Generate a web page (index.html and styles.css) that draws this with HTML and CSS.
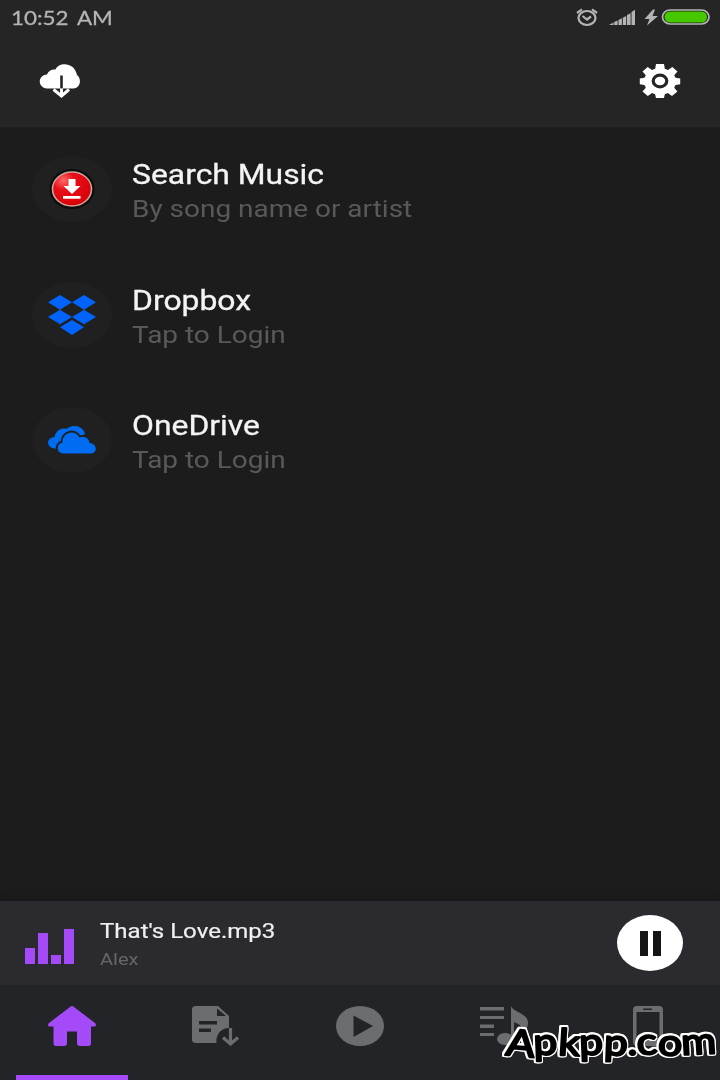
FILE: index.html
```html
<!DOCTYPE html>
<html lang="en">
<head>
    <meta charset="UTF-8">
    <meta name="viewport" content="width=device-width, initial-scale=1.0">
    <title>Music Player</title>
    <link rel="stylesheet" href="styles.css">
</head>
<body>
    <div class="app">
        <header>
            <div class="status">
                <span class="time">10:52 AM</span>
                <svg width="136" height="20" viewBox="0 0 136 20">
                    <!-- alarm -->
                    <g fill="none" stroke="#b4b4b4" stroke-width="2.200">
                        <ellipse cx="12" cy="10" rx="8.500" ry="7"/>
                        <path d="M7.500 8l4.500 3.500 4-3M2 5l5-3.700M22 5l-5-3.700"/>
                    </g>
                    <!-- signal -->
                    <path fill="#b4b4b4" d="M34 17l4.500-2.500V17zM39.200 14l3.400-1.500V17h-3.400zM43.500 12l3.400-1.700V17h-3.400zM47.800 9.700l3.400-1.600V17h-3.400zM52 7l3.600-1.700V17H52zM56.500 4l3.500-2.200V17h-3.500z"/>
                    <!-- battery -->
                    <path fill="#b4b4b4" d="M78 1.500L69.500 11h5L72 17.500 83 8h-5.500L80 1.500z"/>
                    <rect x="87.500" y="2" width="46.500" height="14" rx="7.500" fill="#1b2a12" stroke="#b4b4b4" stroke-width="1.700"/>
                    <rect x="89.500" y="3.500" width="42.500" height="11" rx="5.500" fill="#46c800"/>
                </svg>
            </div>
            <div class="toolbar">
                <svg width="42" height="36" viewBox="0 0 42 36">
                    <path fill="#fff" d="M8 25.500C-1.500 24.500-1.800 12.500 8 11.500 9.500 7.500 13 6 16.500 6.500c3.500-8 19-7.500 21.500 5.500 5 4 3.500 13-3.500 13.500z"/>
                    <path stroke="#252525" stroke-width="2.600" d="M22.500 12.500v13"/>
                    <path fill="none" stroke="#fff" stroke-width="3" d="M22.500 25.500v7.500M14.500 26.500l8 6.500 7.500-6.500"/>
                </svg>
                <svg width="42" height="36" viewBox="0 0 42 36">
                    <path fill="#fff" d="M17 1h8l.8 4.700 3.200 1.200 4.300-3 5.200 4.600-3.300 3.800 1.300 2.500 4.700.6v5.900l-4.700.8-1.300 2.600 3.200 3.800-5.400 4.500-4.200-2.900-3 1.200L25 35h-8l-.9-3.700-3-1.200-4.300 2.900-5.300-4.500 3.300-3.800-1.300-2.600L.8 21.300v-5.900l4.700-.6 1.300-2.500-3.300-3.800 5.200-4.600 4.300 3 3.200-1.200z"/>
                    <ellipse cx="21" cy="18" rx="6.800" ry="5.800" fill="#fff" stroke="#252525" stroke-width="3.200"/>
                </svg>
            </div>
        </header>

        <main>
            <div class="row">
                <div class="icon">
                    <svg width="50" height="44" viewBox="0 0 50 44">
                        <defs>
                            <radialGradient id="red" cx=".28" cy=".25" r=".8">
                                <stop offset="0" stop-color="#ff6a6a"/>
                                <stop offset=".35" stop-color="#e81018"/>
                                <stop offset="1" stop-color="#d90008"/>
                            </radialGradient>
                        </defs>
                        <ellipse cx="25" cy="22" rx="22.500" ry="20" fill="#0c0c0c"/>
                        <ellipse cx="25" cy="22" rx="19.500" ry="17" fill="url(#red)" stroke="#c9a398" stroke-width="1.600"/>
                        <path fill="#fff" d="M21.500 12h7v7h5L25 27l-8.500-8h5zM16 29h17.500v2.800H16z"/>
                    </svg>
                </div>
                <div class="info">
                    <div class="name"><span>Search Music</span></div>
                    <div class="desc"><span>By song name or artist</span></div>
                </div>
            </div>
            <div class="row">
                <div class="icon">
                    <svg width="48" height="40" viewBox="0 0 48 40">
                        <path fill="#0064fa" d="M12 0l12 7.300-12 7.400L0 7.300zM36 0l12 7.300-12 7.400-12-7.400zM12 14.700L24 22l-12 7.300L0 22zM36 14.700L48 22l-12 7.300L24 22zM24 25l12 7.300L24 40l-12-7.700z"/>
                    </svg>
                </div>
                <div class="info">
                    <div class="name"><span>Dropbox</span></div>
                    <div class="desc"><span>Tap to Login</span></div>
                </div>
            </div>
            <div class="row">
                <div class="icon">
                    <svg class="cloud" width="48" height="28" viewBox="0 0 48 28">
                        <path d="M8 22.500C-2 22.500-2.500 12 6.500 11 8 4 14 1.500 18.500 3 24-2 34-1 37 7.500L28 16z"/>
                        <path class="front" d="M15.500 27.500C8 27.500 8 17.500 14.500 16.500 14 7 26.500 2.500 31.500 11.500c5-1.500 9.500.5 10 5.500 8.500 1 8 10.500 1 10.500z"/>
                    </svg>
                </div>
                <div class="info">
                    <div class="name"><span>OneDrive</span></div>
                    <div class="desc"><span>Tap to Login</span></div>
                </div>
            </div>
        </main>

        <div class="player">
            <div class="bars">
                <i class="b1"></i><i class="b2"></i><i class="b3"></i><i class="b4"></i>
            </div>
            <div class="song">
                <div class="title"><span>That's Love.mp3</span></div>
                <div class="artist"><span>Alex</span></div>
            </div>
            <div class="pause"><i></i><i></i></div>
        </div>

        <nav>
            <div class="tab active">
                <svg width="48" height="40" viewBox="0 0 48 40">
                    <path fill="#a44af8" d="M24 0q1 0 2 1l21 16q2 2 0 3.500h-4V37q0 3-2.500 3H32q-3 0-3-3V25.500H19V37q0 3-3 3H8q-2.500 0-2.500-3V20.500H1q-2-1.500 0-3.500L22 1q1-1 2-1z"/>
                </svg>
            </div>
            <div class="tab">
                <svg width="48" height="40" viewBox="0 0 48 40">
                    <path fill="#6c6d70" d="M4 0h22l11 10v12c-8 0-13.500 7-12.500 15H4q-4 0-4-3.500v-30Q0 0 4 0z"/>
                    <path fill="#232428" d="M25 2.500V10h9zM7 15h18v3.500H7zM7 22.500h12V26H7z"/>
                    <path fill="none" stroke="#6c6d70" stroke-width="3.200" d="M38.500 22v15.500M31 31.500l7.500 6.500 7.500-6.500"/>
                </svg>
            </div>
            <div class="tab">
                <svg width="48" height="40" viewBox="0 0 48 40">
                    <ellipse cx="24" cy="20" rx="24" ry="20" fill="#6c6d70"/>
                    <path fill="#232428" d="M17.500 9.500v21.500l19.500-11z"/>
                </svg>
            </div>
            <div class="tab">
                <svg width="48" height="40" viewBox="0 0 48 40">
                    <path fill="#6c6d70" d="M0 1h24v3.500H0zM0 10h24v3H0zM0 18.500h14V22H0zM0 27h14v3H0z"/>
                    <ellipse cx="25" cy="33" rx="8" ry="6" fill="#6c6d70"/>
                    <path fill="#6c6d70" d="M31 0c3 7 17 7 17 17 0 5-3 8-6 9 2-5-3-8-8-10v17h-3z"/>
                </svg>
            </div>
            <div class="tab">
                <svg width="30" height="40" viewBox="0 0 30 40">
                    <path fill="#6c6d70" fill-rule="evenodd" d="M4 0h22q4 0 4 4v32q0 4-4 4H4q-4 0-4-4V4q0-4 4-4zM3.500 6v26h23V6zM10 2.500v1.500h9V2.500z"/>
                </svg>
            </div>
        </nav>

        <svg class="watermark" width="224" height="64" viewBox="0 0 224 64">
            <text x="9" y="41" textLength="212" lengthAdjust="spacingAndGlyphs" rotate="6 -2 3 -2 2 0 -4 3 -3">Apkpp.com</text>
        </svg>
    </div>
</body>
</html>
```
FILE: styles.css
```css
body {
    margin: 0;
    background: #1c1c1d;
    font-family: Roboto, 'Liberation Sans', sans-serif;
    color: #fff;
}
.app {
    position: relative;
    width: 720px;
    height: 1080px;
    display: flex;
    flex-direction: column;
    overflow: hidden;
}
span {
    display: inline-block;
    white-space: nowrap;
    transform-origin: 0 50%;
}
svg {
    display: block;
}
header {
    height: 127px;
    background: #252525;
    border-bottom: 1px solid #1f1f1f;
}
.status {
    height: 36px;
    display: flex;
    justify-content: space-between;
    align-items: center;
    padding: 0 9px 1px 11px;
    box-sizing: border-box;
}
.time {
    font-family: Lato, sans-serif;
    font-size: 20px;
    line-height: 24px;
    padding-bottom: 1px;
    word-spacing: 3px;
    color: #b4b4b4;
    -webkit-text-stroke: 0.3px #b4b4b4;
    transform: scaleX(1.12);
}
.toolbar {
    height: 90px;
    display: flex;
    justify-content: space-between;
    align-items: center;
    padding: 0 39px;
}
main {
    flex: 1;
    padding-top: 28px;
}
.row {
    display: flex;
    align-items: center;
    height: 66px;
    padding-left: 32px;
    margin-bottom: 59px;
}
.row:first-child {
    margin-bottom: 60px;
}
.icon {
    width: 80px;
    height: 66px;
    border-radius: 50%;
    background: #202021;
    display: flex;
    align-items: center;
    justify-content: center;
    margin-right: 20px;
}
.cloud {
    fill: #006cf2;
}
.front {
    stroke: #202021;
    stroke-width: 4px;
    paint-order: stroke;
}
.info {
    padding-top: 6px;
}
.name {
    font-size: 27px;
    line-height: 34px;
    color: #f4f4f4;
    -webkit-text-stroke: 0.3px #f4f4f4;
}
.desc {
    font-size: 24px;
    line-height: 34px;
    color: #59595a;
}
.name span {
    transform: scaleX(1.18);
}
.desc span {
    transform: scaleX(1.165);
}
/* now playing */
.player {
    height: 84px;
    background: #2b2b2f;
    display: flex;
    align-items: center;
    padding: 0 37px 0 25px;
    box-shadow: 0 0 8px rgba(0, 0, 0, 0.35);
}
.bars {
    width: 75px;
    height: 35px;
    margin-top: 7px;
    display: flex;
    align-items: flex-end;
    gap: 3px;
}
.bars i {
    width: 10px;
    background: #a44af8;
}
.b1 { height: 16px; }
.b2 { height: 31px; }
.b3 { height: 9px; }
.b4 { height: 35px; }
.song {
    flex: 1;
    padding-top: 3px;
}
.title {
    font-size: 21px;
    line-height: 29px;
    color: #f0f0f2;
    -webkit-text-stroke: 0.2px #f0f0f2;
}
.artist {
    font-size: 17px;
    line-height: 26px;
    color: #666669;
}
.title span {
    transform: scaleX(1.145);
}
.artist span {
    transform: scaleX(1.18);
}
.pause {
    width: 66px;
    height: 56px;
    border-radius: 50%;
    background: #fff;
    display: flex;
    align-items: center;
    justify-content: center;
    gap: 5px;
}
.pause i {
    width: 8px;
    height: 25px;
    background: #151516;
}
/* bottom tabs */
nav {
    height: 95px;
    background: #232428;
    display: flex;
}
.tab {
    width: 144px;
    display: flex;
    justify-content: center;
    padding-top: 21px;
    box-sizing: border-box;
}
.active {
    background: linear-gradient(#a44af8, #a44af8) 16px 100% / 112px 5px no-repeat;
}
.watermark {
    position: absolute;
    left: 496px;
    top: 1014px;
    /* white outline round the marker letters */
    filter: drop-shadow(1.5px 0 0 #fff) drop-shadow(-1.5px 0 0 #fff) drop-shadow(0 1.5px 0 #fff) drop-shadow(0 -1.5px 0 #fff);
}
.watermark text {
    font-family: Lato, sans-serif;
    font-size: 37px;
    fill: #000;
    stroke: #000;
    stroke-width: 2px;
    stroke-linejoin: round;
}
```
